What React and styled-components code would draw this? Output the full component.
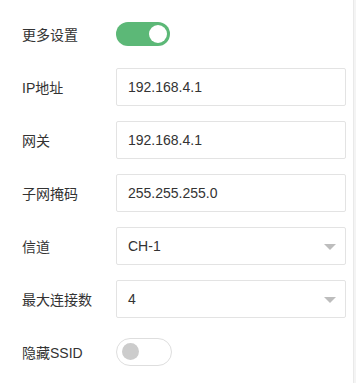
import React, { useState } from 'react';
import styled, { createGlobalStyle } from 'styled-components';

const GlobalStyle = createGlobalStyle`
  body {
    margin: 0;
    background: #fff;
    font-family: "Liberation Sans", "Noto Sans CJK SC", sans-serif;
  }
`;

const Panel = styled.div`
  width: 354px;
  height: 383px;
  box-sizing: border-box;
  padding: 7px 0 0 22px;
  border-right: 1px solid #e9e9e9;
  box-shadow: 2px 0 0 #f4f4f4;
`;

const Row = styled.div`
  display: flex;
  align-items: center;
  height: 53px;
`;

const Label = styled.div`
  width: 94px;
  font-size: 14px;
  color: #333;
`;

const Field = styled.div`
  position: relative;
  width: 230px;
  height: 38px;
  box-sizing: border-box;
  border: 1px solid #e3e3e3;
  border-radius: 2px;
  display: flex;
  align-items: center;
  padding-left: 11px;
  font-size: 14px;
  color: #333;
`;

const Caret = styled.span`
  position: absolute;
  right: 9px;
  top: 16px;
  width: 0;
  height: 0;
  border-left: 6px solid transparent;
  border-right: 6px solid transparent;
  border-top: 6px solid #bdbdbd;
`;

const Switch = styled.button`
  position: relative;
  padding: 0;
  cursor: pointer;
  box-sizing: border-box;
  width: ${(p) => (p.$on ? '54px' : '56px')};
  height: ${(p) => (p.$on ? '24px' : '28px')};
  border-radius: 14px;
  border: ${(p) => (p.$on ? 'none' : '1px solid #dedede')};
  background: ${(p) => (p.$on ? '#5cb877' : '#fff')};

  &::after {
    content: '';
    position: absolute;
    border-radius: 50%;
    width: ${(p) => (p.$on ? '18px' : '17px')};
    height: ${(p) => (p.$on ? '18px' : '17px')};
    top: ${(p) => (p.$on ? '3px' : '4.5px')};
    left: ${(p) => (p.$on ? '33px' : '5px')};
    background: ${(p) => (p.$on ? '#fff' : '#cccccc')};
  }
`;

const fields = [
  { label: 'IP地址', value: '192.168.4.1' },
  { label: '网关', value: '192.168.4.1' },
  { label: '子网掩码', value: '255.255.255.0' },
  { label: '信道', value: 'CH-1', select: true },
  { label: '最大连接数', value: '4', select: true },
];

export default function App() {
  const [more, setMore] = useState(true);
  const [hidden, setHidden] = useState(false);

  return (
    <>
      <GlobalStyle />
      <Panel>
        <Row>
          <Label>更多设置</Label>
          <Switch $on={more} onClick={() => setMore(!more)} />
        </Row>
        {fields.map((f) => (
          <Row key={f.label}>
            <Label>{f.label}</Label>
            <Field>
              {f.value}
              {f.select && <Caret />}
            </Field>
          </Row>
        ))}
        <Row>
          <Label>隐藏SSID</Label>
          <Switch $on={hidden} onClick={() => setHidden(!hidden)} />
        </Row>
      </Panel>
    </>
  );
}
